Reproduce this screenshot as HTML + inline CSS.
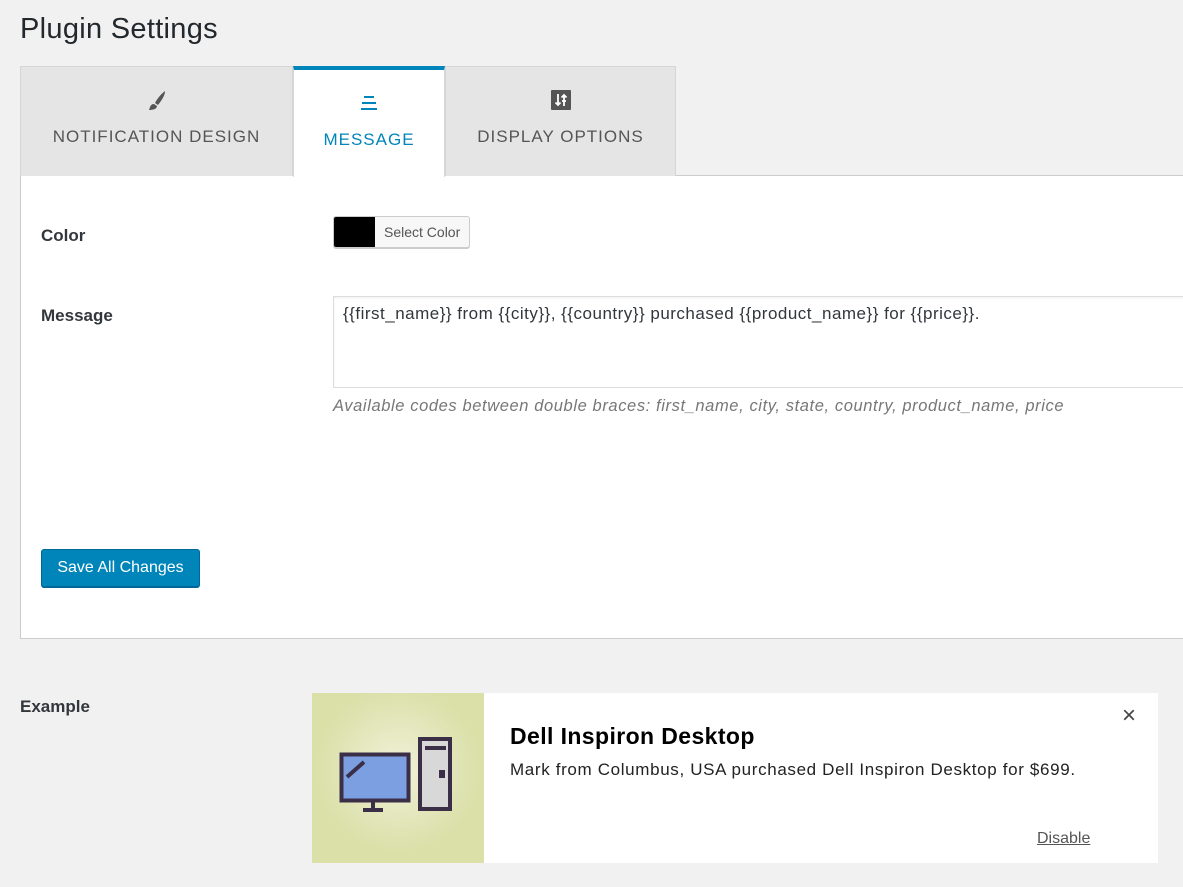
<!DOCTYPE html>
<html><head><meta charset="utf-8"><style>
*{margin:0;padding:0;box-sizing:border-box}
body{width:1183px;height:887px;background:#f1f1f1;font-family:"Liberation Sans",sans-serif;color:#23282d;position:relative;overflow:hidden}
.a{position:absolute;white-space:nowrap}
.tab{position:absolute;top:66px;height:110px;background:#e5e5e5;border:1px solid #d6d6d6;border-bottom:none;text-align:center;color:#555;font-size:17px;letter-spacing:1px}
</style></head><body>
<div class="a" style="left:20px;top:13px;font-size:29px;color:#23282d;letter-spacing:0.3px">Plugin Settings</div>

<div class="a" style="left:20px;top:175px;width:1170px;height:464px;background:#fff;border:1px solid #ccc"></div>

<div class="tab" style="left:20px;width:273px">
<svg class="a" style="left:124px;top:22px" width="24" height="24" viewBox="0 0 24 24"><path d="M20 2 C16 5 12 10 10 14 L13 16 C16 12 20 7 20 2Z M9 15 C5 15 5 19 4 21 C8 21 12 20 12 17Z" fill="#555"/></svg>
<div class="a" style="left:0;width:100%;top:60px">NOTIFICATION DESIGN</div></div>
<div class="tab" style="left:293px;width:152px;background:#fff;border-top:4px solid #0085ba;height:111px;color:#0085ba;border-color:#0085ba #d6d6d6 #fff #d6d6d6">
<svg class="a" style="left:65px;top:24px" width="20" height="20" viewBox="0 0 20 20" fill="#0085ba"><rect x="5" y="2" width="10" height="2"/><rect x="3" y="8" width="14" height="2"/><rect x="2" y="14" width="16" height="2"/></svg>
<div class="a" style="left:0;width:100%;top:60px">MESSAGE</div></div>
<div class="tab" style="left:445px;width:231px">
<svg class="a" style="left:105px;top:23px" width="20" height="20" viewBox="0 0 20 20"><rect width="20" height="20" rx="1" fill="#555"/><path d="M7 4v11 M4.5 12.5 7 15 9.5 12.5 M13 16V5 M10.5 7.5 13 5 15.5 7.5 M11 11h4" stroke="#fff" stroke-width="1.8" fill="none"/></svg>
<div class="a" style="left:0;width:100%;top:60px">DISPLAY OPTIONS</div></div>

<div class="a" style="left:41px;top:226px;font-size:17px;font-weight:bold;color:#32373c">Color</div>
<div class="a" style="left:333px;top:216px;width:137px;height:32px;border:1px solid #ccc;border-radius:3px;background:#f7f7f7;box-shadow:0 1px 0 #ccc;overflow:hidden">
<div class="a" style="left:0;top:0;width:41px;height:30px;background:#000"></div>
<div class="a" style="left:50px;top:7px;font-size:14px;color:#555">Select Color</div></div>

<div class="a" style="left:41px;top:306px;font-size:17px;font-weight:bold;color:#32373c">Message</div>
<div class="a" style="left:333px;top:296px;width:860px;height:92px;border:1px solid #ddd;background:#fff;box-shadow:inset 0 1px 2px rgba(0,0,0,.07)"></div>
<div class="a" style="left:343px;top:304px;font-size:17px;color:#32373c;letter-spacing:0.5px">{{first_name}} from {{city}}, {{country}} purchased {{product_name}} for {{price}}.</div>
<div class="a" style="left:333px;top:397px;font-size:16.5px;font-style:italic;color:#777;letter-spacing:0.6px">Available codes between double braces: first_name, city, state, country, product_name, price</div>

<div class="a" style="left:41px;top:549px;width:159px;height:38px;background:#0085ba;border:1px solid #006799;border-radius:3px;box-shadow:0 1px 0 #006799;color:#fff;font-size:16px;text-align:center;line-height:36px">Save All Changes</div>

<div class="a" style="left:20px;top:697px;font-size:17px;font-weight:bold;color:#32373c">Example</div>
<div class="a" style="left:312px;top:693px;width:846px;height:170px;background:#fff"></div>
<div class="a" style="left:312px;top:693px;width:172px;height:170px;background:radial-gradient(circle at 50% 45%,#f0f2d8 0%,#dbdfa8 65%)"></div>
<svg class="a" style="left:312px;top:693px" width="172" height="170">
<rect x="29.5" y="61.5" width="67" height="46" fill="#7b9fe0" stroke="#3b2f48" stroke-width="4"/>
<line x1="35" y1="84" x2="52" y2="69" stroke="#3b2f48" stroke-width="4"/>
<line x1="61" y1="108" x2="61" y2="116" stroke="#3b2f48" stroke-width="4"/>
<line x1="51" y1="117" x2="71" y2="117" stroke="#3b2f48" stroke-width="4"/>
<rect x="108" y="46" width="30" height="70" fill="#d8d8d8" stroke="#3b2f48" stroke-width="4"/>
<rect x="113" y="53" width="21" height="4" fill="#3b2f48"/>
<rect x="127" y="77" width="6" height="8" fill="#3b2f48"/>
</svg>
<div class="a" style="left:510px;top:723px;font-size:23px;font-weight:bold;color:#000;letter-spacing:0.4px">Dell Inspiron Desktop</div>
<div class="a" style="left:510px;top:760px;font-size:17px;color:#222;letter-spacing:0.65px">Mark from Columbus, USA purchased Dell Inspiron Desktop for $699.</div>
<div class="a" style="left:1122px;top:702px;font-size:24px;color:#444">×</div>
<div class="a" style="left:1037px;top:830px;font-size:16px;color:#555;text-decoration:underline">Disable</div>
</body></html>
